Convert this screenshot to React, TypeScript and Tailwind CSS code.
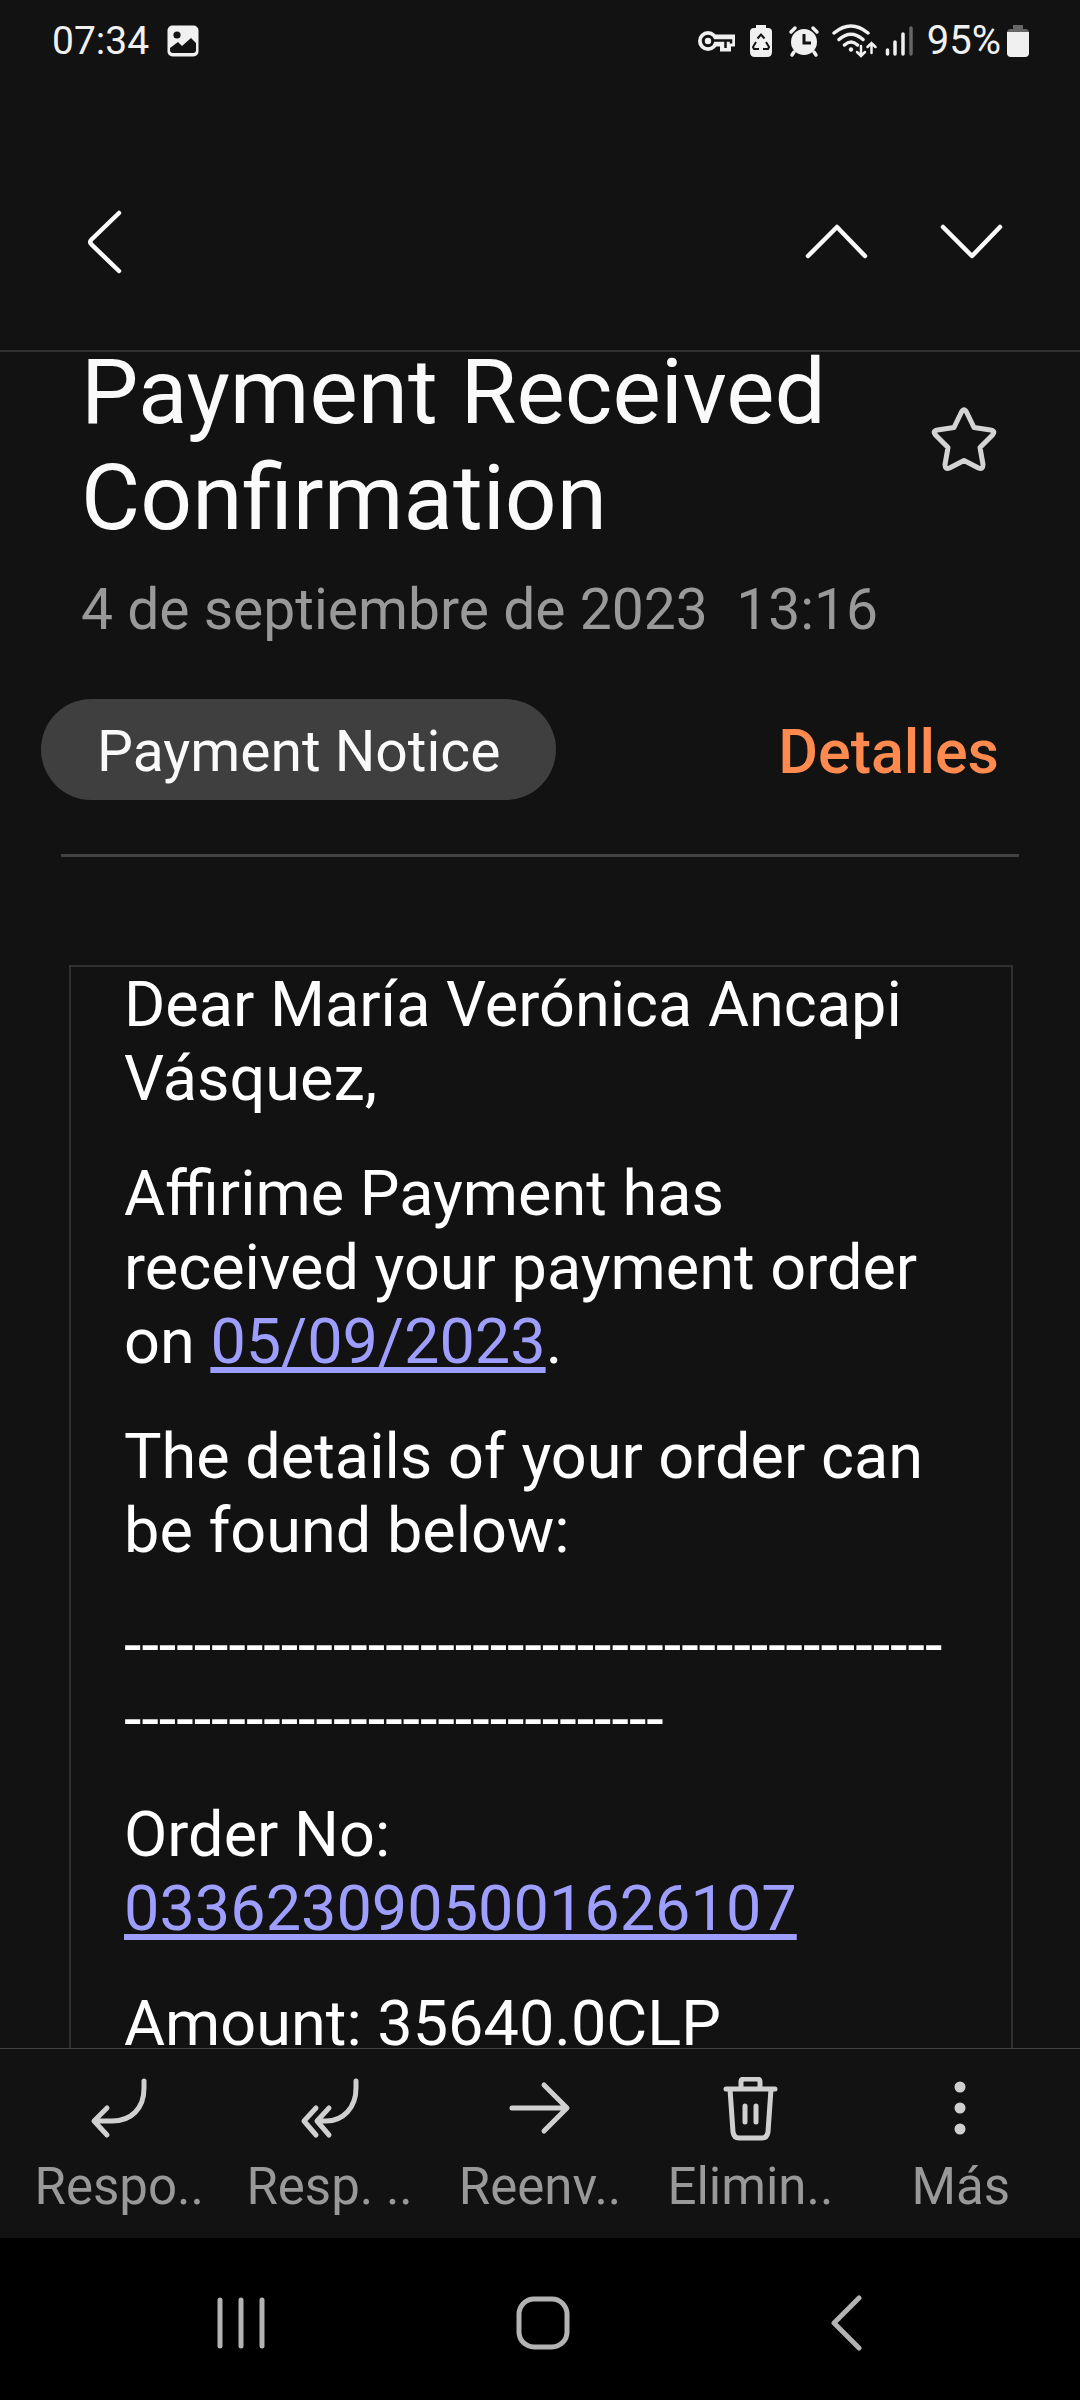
import type { ReactNode } from 'react'

const orderRule = '-'.repeat(78)

const linkClass = 'text-[#9e9eff] underline decoration-[6px] underline-offset-[4px] [text-decoration-skip-ink:none]'

function BackIcon() {
  return (
    <svg width="40" height="68" viewBox="0 0 40 68" fill="none" stroke="#fafafa" strokeWidth="4.5" strokeLinecap="round" strokeLinejoin="round">
      <path d="M33 5 5.500 31.500Q3 34 5.500 36.500L33 63" />
    </svg>
  )
}

function UpIcon() {
  return (
    <svg width="68" height="40" viewBox="0 0 68 40" fill="none" stroke="#fafafa" strokeWidth="4.5" strokeLinecap="round" strokeLinejoin="round">
      <path d="M6 34 35 5 63 34" />
    </svg>
  )
}

function DownIcon() {
  return (
    <svg width="68" height="40" viewBox="0 0 68 40" fill="none" stroke="#fafafa" strokeWidth="4.5" strokeLinecap="round" strokeLinejoin="round">
      <path d="M6 5 35 34 63 5" />
    </svg>
  )
}

function StarIcon() {
  return (
    <svg width="66" height="68" viewBox="0 0 66 68" fill="none" stroke="#d4d4d4" strokeWidth="5" strokeLinejoin="round">
      <path d="M30.500 6Q33 1.500 35.500 6L43 21.500 59.500 24Q65 25 61.500 29L49 41.500 52 58.500Q52 64 47.500 62L33 54.500 18.500 62Q14 64 14 58.500L17 41.500 4.500 29Q1 25 6.500 24L23 21.500Z" />
    </svg>
  )
}

function StatusBar() {
  return (
    <div className="flex h-[82px] shrink-0 items-center justify-between pl-[52px] pr-[51px] text-[#f0f0f0]">
      <div className="flex items-center gap-[18px]">
        <span className="text-[39px] leading-[48px]">07:34</span>
        <svg width="32" height="32" viewBox="0 0 32 32" aria-hidden="true">
          <rect x="0.500" y="0.500" width="31" height="31" rx="5" fill="#f0f0f0" />
          <circle cx="10" cy="10" r="3.600" fill="#121212" />
          <path d="M3 23l8-6 4 4 9-8 5 5v7a3 3 0 0 1-3 3H6a3 3 0 0 1-3-3z" fill="#121212" />
        </svg>
      </div>
      <div className="flex items-center">
        <svg width="230" height="36" viewBox="0 0 230 36" fill="none" stroke="#f0f0f0" aria-hidden="true">
          {/* VPN key */}
          <path d="M18 11.500h20v12h-4v5H23v-5h-5z" fill="#f0f0f0" stroke="none" />
          <circle cx="11" cy="18" r="10" fill="#f0f0f0" stroke="none" />
          <circle cx="11" cy="18" r="4.700" stroke="#121212" strokeWidth="3" />
          <path d="M15 17.500h19v3M28.500 17v8" stroke="#121212" strokeWidth="2.500" />
          {/* battery protection */}
          <path d="M59 2h10v3h2q4 0 4 4v20q0 5-5 5H58q-5 0-5-5V9q0-4 4-4h2z" fill="#f0f0f0" stroke="none" />
          <path d="M60.500 15.500l3.500-4 3.500 4M59 19l-3 5 1 2h5M69 19l3 5-1 2h-5" stroke="#121212" strokeWidth="2" />
          {/* alarm */}
          <circle cx="107" cy="19" r="13" fill="#f0f0f0" stroke="none" />
          <path d="M94 9l4-4M120 9l-4-4M97 29l-2 3M117 29l2 3" strokeWidth="3.500" strokeLinecap="round" />
          <path d="M107 11v9h7" stroke="#121212" strokeWidth="3" />
          {/* wifi */}
          <path d="M137 10q17-14 34 0M142 16.500q12-10.500 24 0M147.500 22q6.500-6 13 0" strokeWidth="3.500" strokeLinecap="round" />
          <circle cx="154" cy="26.500" r="2.200" fill="#f0f0f0" stroke="none" />
          <path d="M164 23v9M160 29l4 4 4-4M174.500 30V20M170.500 24l4-4 4 4" strokeWidth="2.500" strokeLinecap="round" />
          {/* signal */}
          <path d="M190.500 27v4M198 19v12M206 11v20" strokeWidth="3.500" strokeLinecap="round" />
          <path d="M214 5v26" stroke="#666" strokeWidth="3.500" strokeLinecap="round" />
        </svg>
        <span className="text-[40px] leading-[48px]">95%</span>
        <svg className="ml-[6px]" width="22" height="34" viewBox="0 0 22 34" aria-hidden="true">
          <path d="M6 1h10v4h2q4 0 4 4H0q0-4 4-4h2z" fill="#666" />
          <path d="M0 8h22v21q0 4-4 4H4q-4 0-4-4z" fill="#f0f0f0" />
        </svg>
      </div>
    </div>
  )
}

function ActionIcon({ children }: { children: ReactNode }) {
  return (
    <svg width="66" height="66" viewBox="0 0 66 66" fill="none" stroke="#d0d0d0" strokeWidth="5" strokeLinecap="round" strokeLinejoin="round" aria-hidden="true">
      {children}
    </svg>
  )
}

const actions = [
  {
    label: 'Respo..',
    icon: <path d="M58 4v7c0 21-13 33-32 33H9M21 31 8 44l13 14" />,
  },
  {
    label: 'Resp. ..',
    icon: <path d="M59 4v7c0 20-13 33-30 33h-6M32 31 20 44l12 14M19 31 7 44l12 14" />,
  },
  {
    label: 'Reenv..',
    icon: <path d="M5 31h54M37 8l23 23-23 23" />,
  },
  {
    label: 'Elimin..',
    icon: <path d="M9 12h49M24 11V5q0-3 3-3h13q3 0 3 3v6M13 12l3 43q1 6 6 6h23q5 0 6-6l3-43M28 29v16M39 29v16" />,
  },
  {
    label: 'Más',
    icon: (
      <g fill="#d0d0d0" stroke="none">
        <circle cx="32" cy="10" r="5.500" />
        <circle cx="32" cy="31" r="5.500" />
        <circle cx="32" cy="52" r="5.500" />
      </g>
    ),
  },
]

export default function App() {
  return (
    <div className="flex h-screen flex-col overflow-hidden bg-[#121212] font-[Roboto,sans-serif] text-[#fafafa]">
      <StatusBar />

      {/* Toolbar */}
      <header className="flex h-[270px] shrink-0 items-center justify-between border-b-2 border-[#303030] pl-[86px] pr-[75px] pt-[52px]">
        <button aria-label="Volver"><BackIcon /></button>
        <div className="flex gap-[67px]">
          <button aria-label="Anterior"><UpIcon /></button>
          <button aria-label="Siguiente"><DownIcon /></button>
        </div>
      </header>

      {/* Scrolled message, its top edge sits under the toolbar */}
      <main className="flex min-h-0 flex-1 flex-col overflow-hidden">
        <div className="-mt-[13px] flex items-start justify-between pl-[81px] pr-[83px]">
          <h1 className="max-w-[800px] text-[91px] leading-[106px]">Payment Received Confirmation</h1>
          <button aria-label="Destacar" className="mt-[67px]"><StarIcon /></button>
        </div>
        <p className="mt-[25px] whitespace-pre pl-[81px] text-[57px] leading-[68px] text-[#999]">{'4 de septiembre de 2023  13:16'}</p>

        <div className="mt-[55px] flex items-center justify-between pl-[41px] pr-[81px]">
          <button className="h-[101px] rounded-full bg-[#3f3f3f] px-[56px] pt-[4px] text-[57px] leading-[68px]">Payment Notice</button>
          <button className="pt-[4px] text-[61px] font-medium leading-[68px] text-[#ff8a50]">Detalles</button>
        </div>

        <hr className="mx-[61px] mt-[54px] border-t-[3px] border-[#424242]" />

        {/* Message body */}
        <article className="ml-[69px] mr-[67px] mt-[108px] flex shrink-0 flex-col gap-[41px] border-2 border-[#303030] px-[53px] pt-px text-[63px] leading-[74px] text-white">
          <p>Dear María Verónica Ancapi Vásquez,</p>
          <p>
            Affirime Payment has received your payment order on{' '}
            <a href="#fecha" className={linkClass}>05/09/2023</a>.
          </p>
          <p>The details of your order can be found below:</p>
          <p className="break-all">{orderRule}</p>
          <p>
            Order No:{' '}
            <a href="#orden" className={linkClass}>0336230905001626107</a>
          </p>
          <p>Amount: 35640.0CLP</p>
        </article>
      </main>

      {/* Message actions */}
      <div className="flex h-[190px] shrink-0 border-t border-[#404040] px-[14px] pt-[28px] text-[#999]">
        {actions.map((action) => (
          <button key={action.label} className="flex flex-1 basis-0 flex-col items-center gap-[12px]">
            <ActionIcon>{action.icon}</ActionIcon>
            <span className="whitespace-nowrap text-[51px] leading-[64px]">{action.label}</span>
          </button>
        ))}
      </div>

      {/* System navigation */}
      <nav className="flex h-[162px] shrink-0 items-center justify-around bg-black pl-[93px] pr-[87px] pt-[8px]">
        <button aria-label="Recientes">
          <svg width="56" height="56" viewBox="0 0 56 56" stroke="#b3b3b3" strokeWidth="5" strokeLinecap="round">
            <path d="M5 5v46M26 5v46M47 5v46" />
          </svg>
        </button>
        <button aria-label="Inicio">
          <svg width="56" height="56" viewBox="0 0 56 56" fill="none" stroke="#b3b3b3" strokeWidth="5">
            <rect x="4" y="4" width="48" height="48" rx="15" />
          </svg>
        </button>
        <button aria-label="Atrás">
          <svg width="56" height="56" viewBox="0 0 56 56" fill="none" stroke="#b3b3b3" strokeWidth="5" strokeLinecap="round" strokeLinejoin="round">
            <path d="M44 3 19 28l25 25" />
          </svg>
        </button>
      </nav>
    </div>
  )
}
